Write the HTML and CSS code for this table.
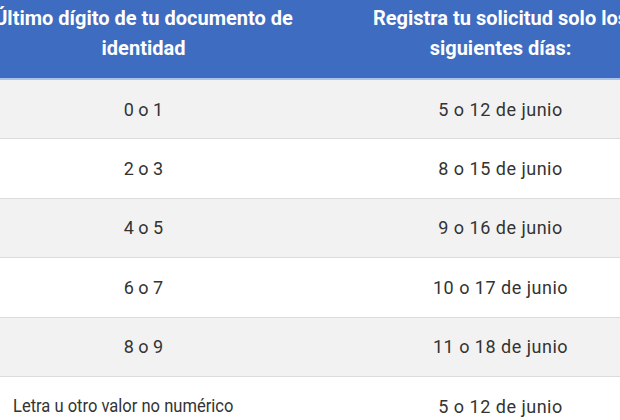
FILE: index.html
```html
<!DOCTYPE html>
<html lang="es">
<head>
<meta charset="utf-8">
<link rel="stylesheet" href="styles.css">
</head>
<body>
<div class="frame">
<table class="schedule">
  <thead>
    <tr>
      <th>Último dígito de tu documento de identidad</th>
      <th>Registra tu solicitud solo los siguientes días:</th>
    </tr>
  </thead>
  <tbody>
    <tr><td>0 o 1</td><td class="date">5 o 12 de junio</td></tr>
    <tr><td>2 o 3</td><td class="date">8 o 15 de junio</td></tr>
    <tr><td>4 o 5</td><td class="date">9 o 16 de junio</td></tr>
    <tr><td>6 o 7</td><td class="date">10 o 17 de junio</td></tr>
    <tr><td>8 o 9</td><td class="date">11 o 18 de junio</td></tr>
    <tr><td class="left"><span class="narrow">Letra u otro valor no numérico</span></td><td class="date">5 o 12 de junio</td></tr>
  </tbody>
</table>
</div>
</body>
</html>
```
FILE: styles.css
```css
html, body {
  margin: 0;
  padding: 0;
  background: #ffffff;
  overflow: hidden;
}
body {
  width: 620px;
  height: 420px;
  font-family: Roboto, "Liberation Sans", sans-serif;
}
.frame {
  width: 714px;
  margin-left: -35px;
}
.schedule {
  width: 100%;
  border-collapse: collapse;
  table-layout: fixed;
}
.schedule th {
  background: #3d6cc1;
  color: #ffffff;
  font-weight: bold;
  font-size: 20px;
  line-height: 30px;
  padding: 3px 16px 0;
  text-align: center;
  vertical-align: top;
  border-bottom: 2px solid #a9c3ea;
  height: 79px;
  box-sizing: border-box;
}
.schedule td {
  font-size: 18px;
  color: #333333;
  text-align: center;
  height: 59.5px;
  padding: 0 10px;
  border-bottom: 1px solid #dcdcdc;
  box-sizing: border-box;
}
.schedule td.date {
  letter-spacing: 0.5px;
}
.schedule tbody tr:nth-child(odd) td {
  background: #f2f2f2;
}
.schedule td.left {
  text-align: left;
  padding-left: 48px;
  white-space: nowrap;
}
.narrow {
  display: inline-block;
  font-size: 19px;
  transform: scaleX(0.87);
  transform-origin: left center;
  margin-top: -3px;
}
```
